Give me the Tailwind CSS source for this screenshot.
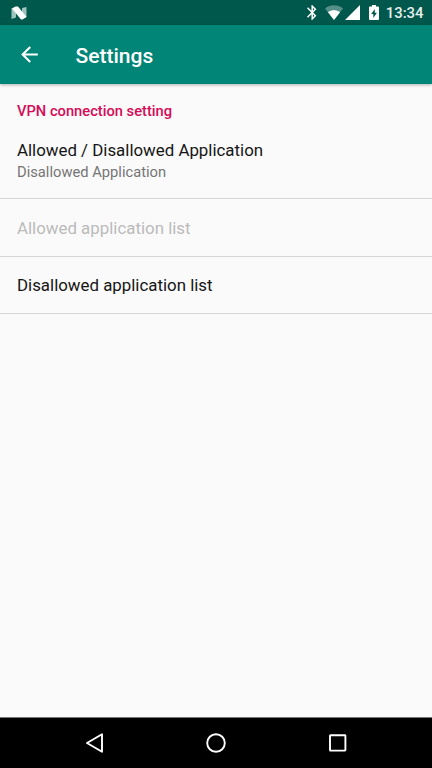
<!DOCTYPE html>
<html lang="en">
<head>
<meta charset="utf-8">
<title>Settings</title>
<script src="https://cdn.jsdelivr.net/npm/@tailwindcss/browser@4"></script>
</head>
<body class="w-[432px] h-[768px] overflow-hidden flex flex-col bg-[#fafafa] font-[Roboto,sans-serif]">
  <div class="h-[25px] shrink-0 bg-[#00574b] flex items-center pl-[11px] pr-[8.500px]">
    <svg class="w-4 h-[14px]" viewBox="0 0 16 14">
      <path d="M.5 2.500 5 1V11.500L.5 13ZM11 2 15.500 1V11L11 13Z" fill="#9fc4bd"/>
      <path d="M4.500 .5H7L15.500 11 11.500 13.500H10L1 2.500Z" fill="#fff"/>
    </svg>
    <svg class="w-[10px] h-[15px] ml-auto" viewBox="5 2 13.500 20" preserveAspectRatio="none" fill="#fff"><path d="M17.710 7.710 12 2h-1v7.590L6.410 5 5 6.410 10.590 12 5 17.590 6.410 19 11 14.410V22h1l5.710-5.710-4.300-4.290 4.300-4.290zM13 5.830l1.880 1.880L13 9.590V5.830zm1.880 10.460L13 18.170v-3.760l1.880 1.880z"/></svg>
    <svg class="w-[18px] h-[15px] ml-2" viewBox="0 0 18 15">
      <path d="M9 15 0 3.500C5 -.7 13-.7 18 3.500Z" fill="#fff" fill-opacity=".33"/>
      <path d="M9 15 3 7.300C6.500 4.700 11.500 4.700 15 7.300Z" fill="#fff"/>
    </svg>
    <svg class="w-[15px] h-[15px] ml-[2px]" viewBox="0 0 15 15"><path d="M0 15H15V0Z" fill="#fff"/></svg>
    <svg class="w-[10px] h-[15px] ml-[9px]" viewBox="0 0 10 15"><path fill-rule="evenodd" d="M3 0H7V1.500H9Q10 1.500 10 2.500V14Q10 15 9 15H1Q0 15 0 14V2.500Q0 1.500 1 1.500H3ZM5.800 4 2.200 9H4.300V13L7.900 7.700H5.800Z" fill="#fff"/></svg>
    <span class="ml-[7px] text-[14.900px] leading-[25px] font-medium text-[#e6f0ee] relative top-px whitespace-nowrap">13:34</span>
  </div>
  <header class="h-[59px] shrink-0 bg-[#008577] shadow-[0_1px_3px_rgba(0,0,0,0.3)] flex items-center pl-[17px]">
    <svg class="w-[25px] h-[25px]" viewBox="0 0 24 24" fill="#fff"><path d="M20 11H7.830l5.590-5.590L12 4l-8 8 8 8 1.410-1.410L7.830 13H20v-2z"/></svg>
    <h1 class="ml-[33.500px] text-[21px] leading-7 font-medium text-white relative top-[1px]">Settings</h1>
  </header>
  <main class="flex-1">
    <h2 class="pt-[17px] pl-[17px] text-[14.700px] leading-5 font-medium text-[#d60b57]">VPN connection setting</h2>
    <ul>
      <li class="h-[78px] border-b border-[#d6d6d6] pl-[17px] pt-[18px]">
        <p class="text-[16.860px] leading-[22px] text-[#151515]">Allowed / Disallowed Application</p>
        <p class="pt-px text-[14.720px] leading-5 text-[#757575]">Disallowed Application</p>
      </li>
      <li class="h-[58px] border-b border-[#d6d6d6] pl-[17px] pt-[2px] flex items-center text-[16.860px] text-[#bababa]">Allowed application list</li>
      <li class="h-[57px] border-b border-[#d6d6d6] pl-[17px] pt-[2px] flex items-center text-[16.860px] text-[#151515]">Disallowed application list</li>
    </ul>
  </main>
  <nav class="h-[51px] shrink-0 bg-black border-t border-[#777] flex items-center justify-between pl-[84px] pr-[84px]">
    <svg class="w-5 h-5" viewBox="0 0 20 20"><path d="M18 1.200V18.800L3 10Z" fill="none" stroke="#fff" stroke-width="1.900" stroke-linejoin="round"/></svg>
    <svg class="w-5 h-5" viewBox="0 0 20 20"><circle cx="10" cy="10" r="8.800" fill="none" stroke="#fff" stroke-width="1.900"/></svg>
    <svg class="w-5 h-5" viewBox="0 0 20 20"><rect x="2" y="2.200" width="15.400" height="15.400" rx=".5" fill="none" stroke="#fff" stroke-width="1.900"/></svg>
  </nav>
</body>
</html>
